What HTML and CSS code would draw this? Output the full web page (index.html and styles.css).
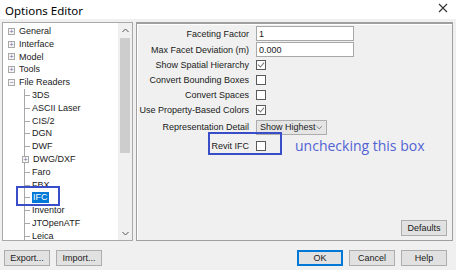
FILE: index.html
```html
<!DOCTYPE html>
<html lang="en">
<head>
    <meta charset="UTF-8">
    <title>Options Editor</title>
    <link rel="stylesheet" href="styles.css">
</head>
<body>
    <div class="titlebar">
        <span class="title">Options Editor</span>
        <svg class="close" width="10" height="10" viewBox="0 0 10 10"><path d="M1 1 L9 9 M9 1 L1 9" stroke="#333" stroke-width="1.1"/></svg>
    </div>

    <div class="main">
        <div class="tree">
            <ul class="nodes">
                <li class="node"><span class="pm">+</span>General</li>
                <li class="node"><span class="pm">+</span>Interface</li>
                <li class="node"><span class="pm">+</span>Model</li>
                <li class="node"><span class="pm">+</span>Tools</li>
                <li class="node"><span class="pm">&minus;</span>File Readers</li>
            </ul>
            <ul class="children">
                <li class="leaf">3DS</li>
                <li class="leaf">ASCII Laser</li>
                <li class="leaf">CIS/2</li>
                <li class="leaf">DGN</li>
                <li class="leaf">DWF</li>
                <li class="leaf branch"><span class="pm small">+</span>DWG/DXF</li>
                <li class="leaf">Faro</li>
                <li class="leaf">FBX</li>
                <li class="leaf selected"><span class="sel">IFC</span><span class="mark"></span></li>
                <li class="leaf">Inventor</li>
                <li class="leaf">JTOpenATF</li>
                <li class="leaf">Leica</li>
            </ul>
            <div class="scrollbar">
                <svg class="arrow" width="7" height="5" viewBox="0 0 7 5"><path d="M0.5 4 L3.5 1 L6.5 4" fill="none" stroke="#555" stroke-width="1"/></svg>
                <div class="thumb"></div>
                <div class="track"></div>
                <svg class="arrow" width="7" height="5" viewBox="0 0 7 5"><path d="M0.5 1 L3.5 4 L6.5 1" fill="none" stroke="#555" stroke-width="1"/></svg>
            </div>
        </div>

        <div class="panel">
            <div class="row">
                <label class="lbl">Faceting Factor</label>
                <input class="field" type="text" value="1">
            </div>
            <div class="row">
                <label class="lbl">Max Facet Deviation (m)</label>
                <input class="field" type="text" value="0.000">
            </div>
            <div class="row short">
                <label class="lbl">Show Spatial Hierarchy</label>
                <span class="check on"></span>
            </div>
            <div class="row short">
                <label class="lbl">Convert Bounding Boxes</label>
                <span class="check"></span>
            </div>
            <div class="row short">
                <label class="lbl">Convert Spaces</label>
                <span class="check"></span>
            </div>
            <div class="row short">
                <label class="lbl">Use Property-Based Colors</label>
                <span class="check on"></span>
            </div>
            <div class="row tall">
                <label class="lbl">Representation Detail</label>
                <div class="select"><span>Show Highest</span>
                    <svg width="7" height="5" viewBox="0 0 7 5"><path d="M0.5 1 L3.5 4 L6.5 1" fill="none" stroke="#777" stroke-width="1"/></svg>
                </div>
            </div>
            <div class="row revit">
                <label class="lbl">Revit IFC</label>
                <span class="check"></span>
                <span class="note">unchecking this box</span>
                <span class="highlight"></span>
            </div>
            <div class="spacer"></div>
            <div class="panel-foot">
                <button class="btn">Defaults</button>
            </div>
        </div>
    </div>

    <div class="footer">
        <div class="group">
            <button class="btn">Export...</button>
            <button class="btn">Import...</button>
        </div>
        <div class="group">
            <button class="btn default">OK</button>
            <button class="btn">Cancel</button>
            <button class="btn">Help</button>
        </div>
    </div>
</body>
</html>
```

FILE: styles.css
```css
body {
    margin: 0;
    width: 456px;
    height: 270px;
    background: #f0f0f0;
    font-family: "Liberation Sans", Arial, sans-serif;
    font-size: 9px;
    color: #1a1a1a;
    overflow: hidden;
}
.titlebar {
    height: 19px;
    background: #fff;
    display: flex;
    align-items: center;
    justify-content: space-between;
    padding: 0 8px 0 5px;
}
.title {
    font-family: "Noto Sans", sans-serif;
    font-size: 11.5px;
    color: #000;
    margin-top: 2px;
}
.close {
    margin-top: -4px;
}
.main {
    display: flex;
    gap: 3px;
    padding: 3px 3px 0 2px;
    height: 219px;
}
.tree {
    width: 131px;
    background: #fff;
    border: 1px solid #a9a9a9;
    position: relative;
    padding-top: 2px;
    box-sizing: border-box;
    overflow: hidden;
}
.nodes, .children {
    list-style: none;
    margin: 0;
    padding: 0;
}
.node, .leaf {
    height: 12.8px;
    line-height: 12.8px;
    display: flex;
    align-items: center;
    white-space: nowrap;
}
.node {
    padding-left: 5px;
}
.pm {
    width: 7px;
    height: 7px;
    border: 1px solid #a8a8a8;
    box-sizing: border-box;
    font-size: 7px;
    line-height: 5px;
    text-align: center;
    color: #6a6a9a;
    margin-right: 4px;
    background: #f6f6f6;
}
.children {
    margin-left: 21px;
    border-left: 1px solid #a8a8a8;
}
.leaf {
    padding-left: 7px;
    position: relative;
}
.leaf::before {
    content: "";
    position: absolute;
    left: 0;
    top: 6px;
    width: 5px;
    border-top: 1px solid #a8a8a8;
}
.branch::before {
    display: none;
}
.pm.small {
    margin-left: -10px;
    margin-right: 4px;
}
.sel {
    background: #0078d7;
    color: #fff;
    padding: 0 1px;
    line-height: 11px;
}
.mark {
    position: absolute;
    left: -9px;
    top: -5px;
    width: 40px;
    height: 16px;
    border: 2px solid #3a4dc8;
}
.scrollbar {
    position: absolute;
    top: 0;
    right: 0;
    bottom: 0;
    width: 14px;
    background: #f0f0f0;
    display: flex;
    flex-direction: column;
    align-items: center;
    padding: 5px 0 4px;
    box-sizing: border-box;
}
.thumb {
    width: 10px;
    height: 115px;
    background: #cdcdcd;
    margin-top: 5px;
}
.track {
    flex: 1;
}
.panel {
    flex: 1;
    border: 1px solid #a0a0a0;
    border-top: 2px solid #a0a0a0;
    box-shadow: inset 1px 1px 0 #fff;
    display: flex;
    flex-direction: column;
    padding-top: 1px;
}
.row {
    display: flex;
    align-items: center;
    height: 15px;
    margin-top: 1px;
    position: relative;
}
.row.short {
    height: 14px;
}
.row.tall {
    height: 16px;
    margin-top: 2px;
}
.row.revit {
    margin-top: 3px;
    height: 15px;
}
.lbl {
    width: 112px;
    text-align: right;
    margin-right: 7px;
    color: #1a1a1a;
    white-space: nowrap;
}
.field {
    width: 98px;
    height: 15px;
    box-sizing: border-box;
    border: 1px solid #a8a8a8;
    font-family: inherit;
    font-size: 9px;
    padding: 0 2px;
    margin: 0;
    background: #fff;
    color: #1a1a1a;
}
.check {
    width: 10px;
    height: 10px;
    box-sizing: border-box;
    border: 1px solid #5a5a5a;
    background: #fff;
    position: relative;
}
.check.on::after {
    content: "";
    position: absolute;
    left: 2px;
    top: 0px;
    width: 3px;
    height: 5px;
    border-right: 1px solid #777;
    border-bottom: 1px solid #777;
    transform: rotate(40deg);
}
.select {
    width: 71px;
    height: 15px;
    box-sizing: border-box;
    border: 1px solid #adadad;
    background: #e5e5e5;
    display: flex;
    align-items: center;
    justify-content: space-between;
    padding: 0 4px 0 3px;
    white-space: nowrap;
}
.note {
    font-family: "Open Sans", sans-serif;
    font-size: 14px;
    color: #5263d4;
    margin-left: 29px;
}
.highlight {
    position: absolute;
    left: 71px;
    top: -6px;
    width: 70px;
    height: 19px;
    border: 2px solid #3a4dc8;
}
.spacer {
    flex: 1;
}
.panel-foot {
    display: flex;
    justify-content: flex-end;
    padding: 0 5px 4px 0;
}
.btn {
    width: 46px;
    height: 16px;
    box-sizing: border-box;
    border: 1px solid #adadad;
    background: #e1e1e1;
    font-family: inherit;
    font-size: 9px;
    color: #1a1a1a;
    padding: 0;
}
.btn.default {
    border: 1px solid #0078d7;
    box-shadow: inset 0 0 0 1px #0078d7;
}
.footer {
    display: flex;
    justify-content: space-between;
    padding: 9px 9px 0 4px;
}
.group {
    display: flex;
    gap: 6px;
}
```
